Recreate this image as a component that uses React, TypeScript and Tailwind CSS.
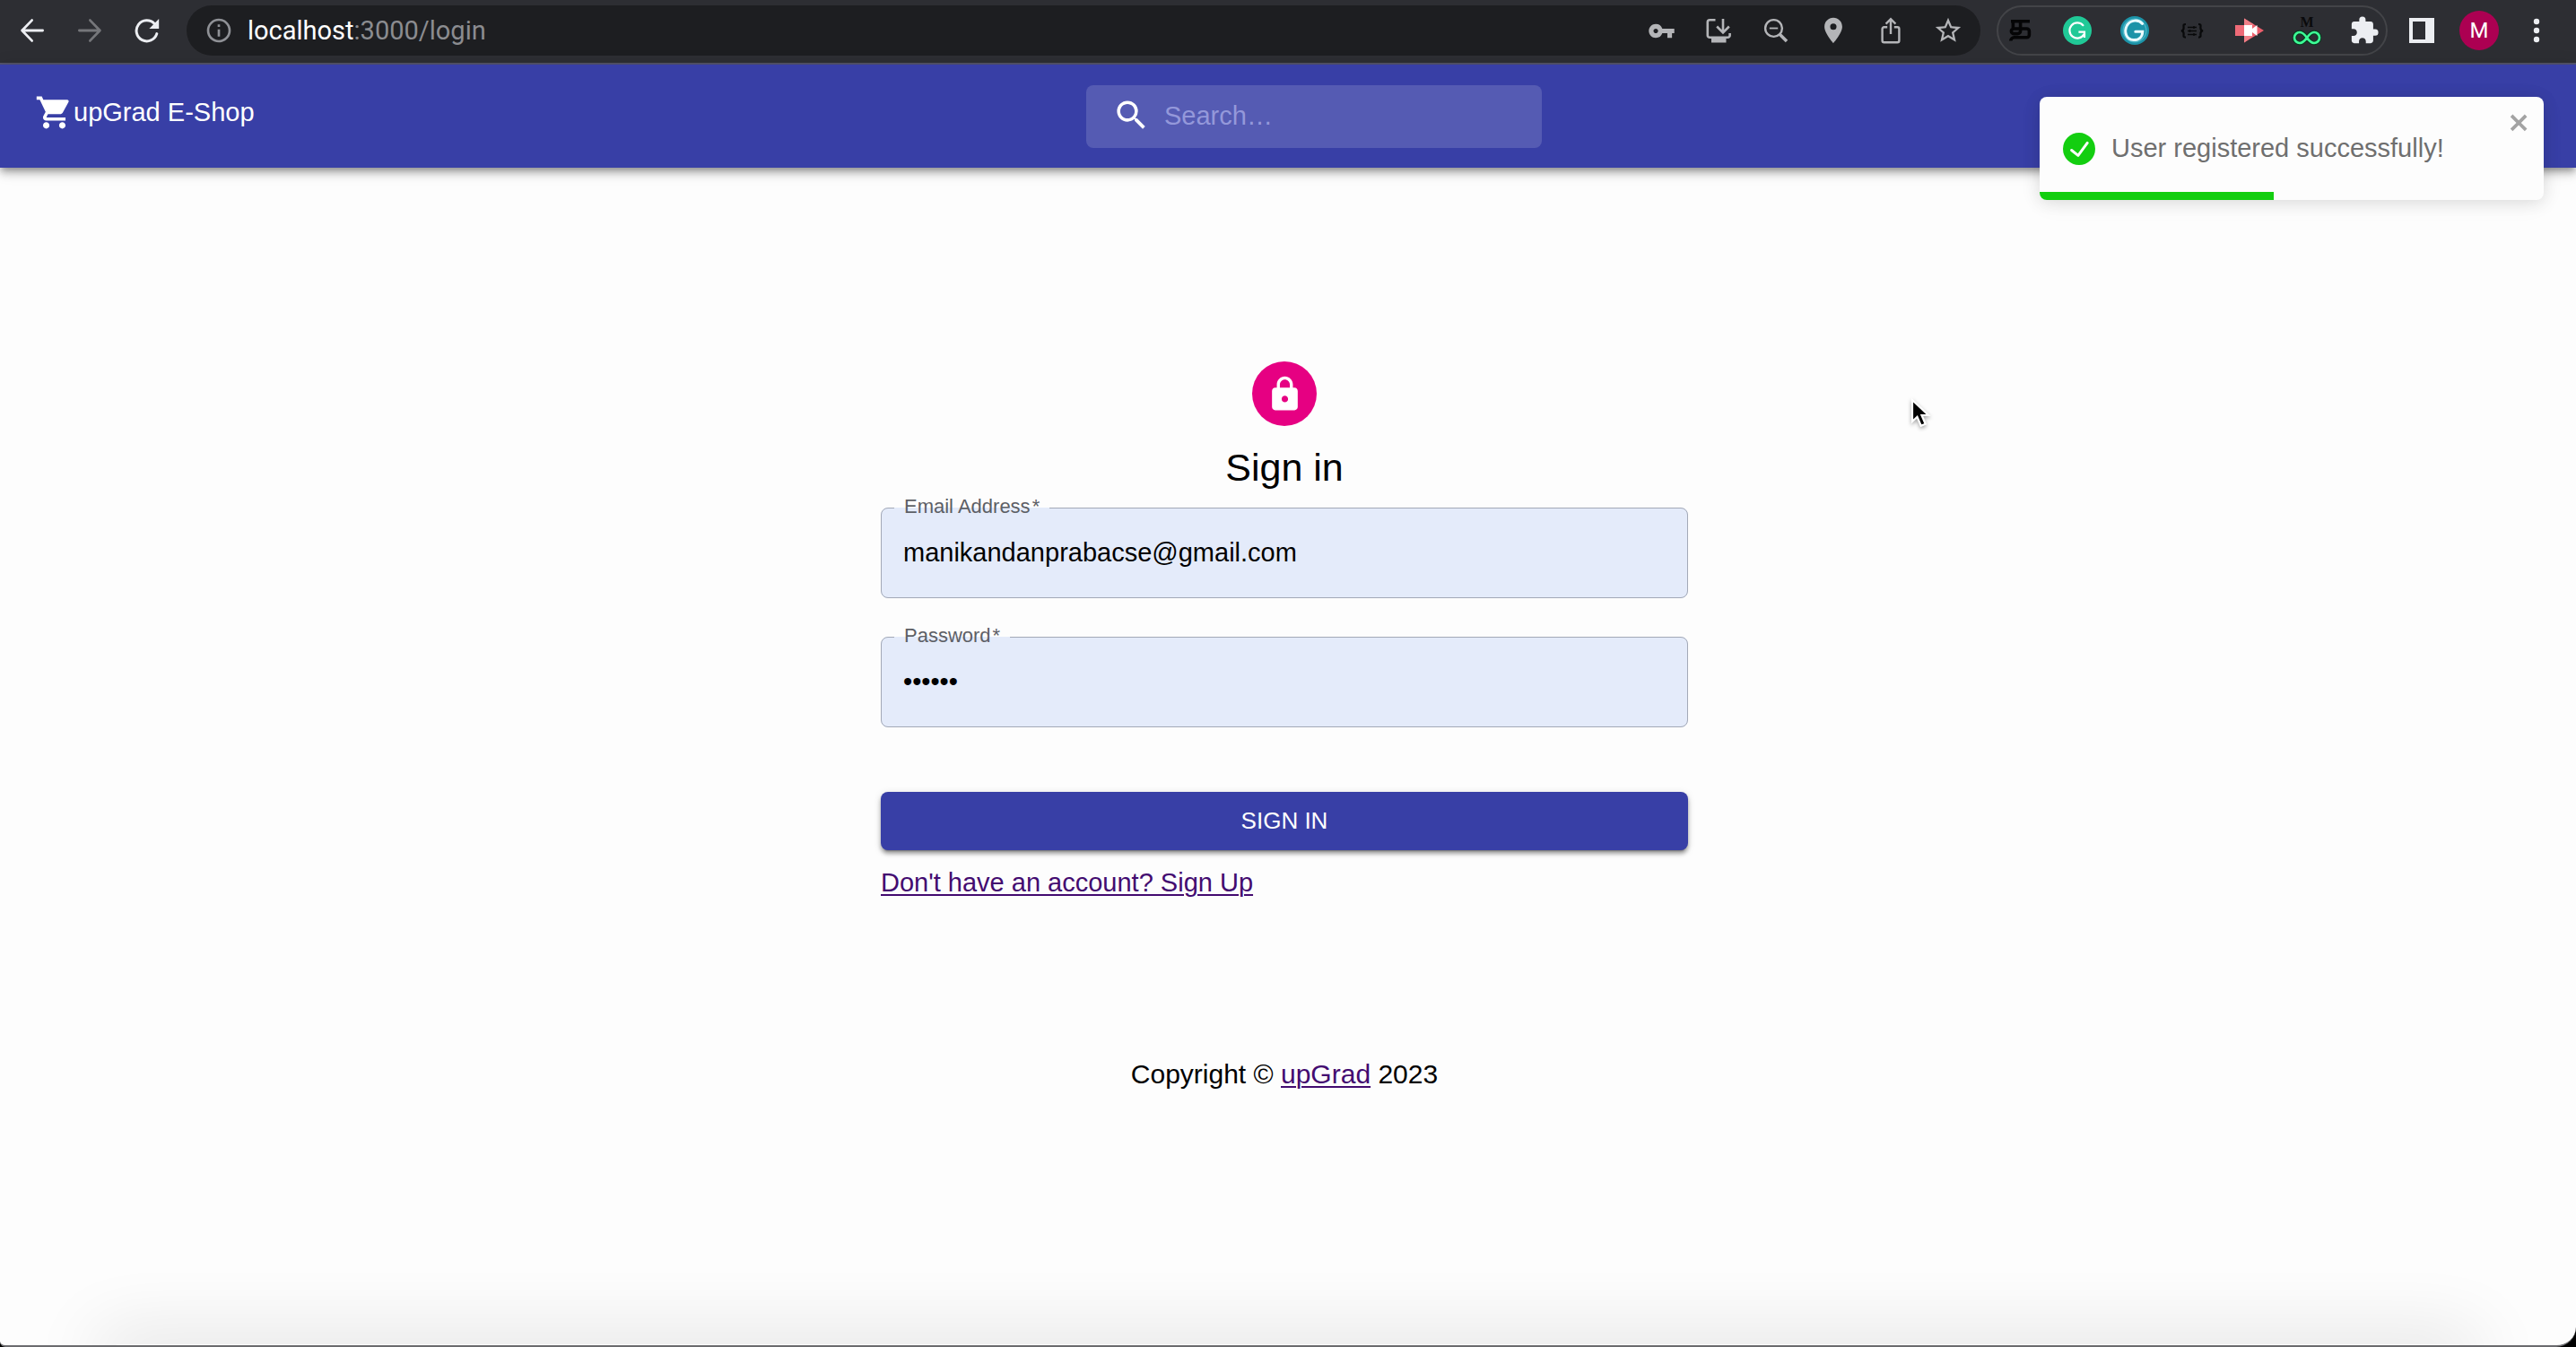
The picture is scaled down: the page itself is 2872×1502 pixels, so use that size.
import type { ReactNode } from "react";
import {
  MdExtension,
  MdInfoOutline,
  MdLocationOn,
  MdLock,
  MdSearch,
  MdShoppingCart,
  MdStarBorder,
  MdVpnKey,
} from "react-icons/md";

function BarButton({ label, narrow, children }: { label: string; narrow?: boolean; children: ReactNode }) {
  return (
    <button
      type="button"
      aria-label={label}
      className={
        narrow
          ? "flex h-12 w-12 shrink-0 items-center justify-center"
          : "flex h-12 w-16 shrink-0 items-center justify-center"
      }
    >
      {children}
    </button>
  );
}

function ArrowIcon({ forward }: { forward?: boolean }) {
  return (
    <svg
      viewBox="0 0 28 28"
      fill="none"
      stroke="currentColor"
      strokeWidth="2.8"
      strokeLinecap="round"
      strokeLinejoin="round"
      className={forward ? "size-7 rotate-180 text-[#75767a]" : "size-7 text-[#eceef2]"}
    >
      <path d="M13.6 2.6 2.6 14l11 11.4M2.6 14h23" />
    </svg>
  );
}

function ReloadIcon() {
  return (
    <svg viewBox="0 0 28 28" fill="none" className="size-7 text-[#eceef2]">
      <path
        d="M22.2 6.4A11.6 11.6 0 1 0 24.8 17.6"
        stroke="currentColor"
        strokeWidth="3"
        strokeLinecap="round"
      />
      <path d="M27.2 1v11H16.4z" fill="currentColor" />
    </svg>
  );
}

function InstallIcon() {
  return (
    <svg viewBox="0 0 30 30" fill="none" stroke="currentColor" strokeWidth="2.6" className="size-[30px]">
      <path d="M11.5 3.3H5.2a2.4 2.4 0 0 0-2.4 2.4v14.7a2.4 2.4 0 0 0 2.4 2.4h20a2.4 2.4 0 0 0 2.4-2.4V18" />
      <path d="M20 2v14.5M13.2 10.5l6.8 6.8 6.8-6.8" />
      <path d="M7 23h16.5v5.5H7z" fill="currentColor" stroke="none" />
    </svg>
  );
}

function ZoomOutIcon() {
  return (
    <svg viewBox="0 0 28 28" fill="none" stroke="currentColor" strokeWidth="2.4" className="size-7">
      <circle cx="11.5" cy="11.5" r="9.4" />
      <path d="M6.8 11.5h9.4" strokeWidth="1.8" />
      <path d="m18 18 8 8" strokeWidth="3.6" />
    </svg>
  );
}

function ShareIcon() {
  return (
    <svg viewBox="0 0 24 30" fill="none" stroke="currentColor" strokeWidth="2.4" className="h-[30px] w-6">
      <path d="M8.2 11.2H4.6a2 2 0 0 0-2 2v13a2 2 0 0 0 2 2h14.8a2 2 0 0 0 2-2v-13a2 2 0 0 0-2-2h-3.6" />
      <path d="M12 19V2.4M6.6 7.6 12 2.2l5.4 5.4" />
    </svg>
  );
}

function TamilIcon() {
  return (
    <svg viewBox="0 0 26 26" fill="none" stroke="#050506" strokeWidth="3.6" className="size-[26px]">
      <path d="M3 2.8h21M5.4 2.8v9.4M13.6 2.8v10.600a3.200 3.200 0 0 1-3.200 3.200H6.200a2.800 2.800 0 0 1-2.800-2.800 2.800 2.800 0 0 1 2.800-2.800H20.600a2.800 2.800 0 0 1 2.800 2.800v4.200a2.800 2.800 0 0 1-2.800 2.800H6.600a3.800 3.800 0 0 0-3.800 3.800" />
    </svg>
  );
}

function GrammarlyIcon() {
  return (
    <svg viewBox="0 0 32 32" fill="none" className="size-8">
      <circle cx="16" cy="16" r="16" fill="#20c997" />
      <path d="M22.400 10.200A8.600 8.600 0 1 0 23.400 20.400" stroke="#fff" strokeWidth="2.200" strokeLinecap="round" />
      <path d="M17.400 17.600h6.600v6.400" stroke="#fff" strokeWidth="2.200" />
    </svg>
  );
}

function TealGIcon() {
  return (
    <svg viewBox="0 0 32 32" fill="none" className="size-8">
      <circle cx="16" cy="16" r="16" fill="#1c93a8" />
      <circle cx="16" cy="16" r="12.800" stroke="#48b5c6" strokeWidth="1.400" />
      <path
        d="M24.600 8.400C20.400 3.600 11.400 3.800 7.400 10.400 3.600 17.600 6.600 26 14.600 26.600c6.400.2 10-3.800 10.200-9.400h-8"
        stroke="#e9fbff"
        strokeWidth="3"
        strokeLinecap="round"
      />
    </svg>
  );
}

function BracesIcon() {
  return (
    <svg viewBox="0 0 28 20" fill="none" stroke="#08090a" strokeWidth="2.200" className="h-5 w-7">
      <path d="M7 3C3.600 3 4.600 4.600 4.600 7S4 10.400 1.800 10.400c2.200 0 2.800 1 2.800 3.400S3.600 17.600 7 17.600M21 3c3.400 0 2.400 1.600 2.400 4s.6 3.400 2.800 3.400c-2.200 0-2.800 1-2.800 3.400s1 3.800-2.400 3.800" />
      <path d="M9 6.500h10M9 10.500h10M9 14.500h10M16 5v3M11.500 9v3M16 13v3" strokeWidth="1.400" />
    </svg>
  );
}

function RecorderIcon() {
  return (
    <svg viewBox="0 0 34 34" className="size-[34px]">
      <path d="M11 3.500 33 17 11 30.500z" fill="#ec5f6c" />
      <path d="M1 11h10v12H1z" fill="#ee6a77" />
      <path d="M11 3.500 21.500 10v1H11zM11 23h10.500L11 30.500z" fill="#f08088" />
      <path d="M11 11h9v4l5.500-4v12L20 19v4h-9z" fill="#fff" />
    </svg>
  );
}

function InfinityIcon() {
  return (
    <span className="flex flex-col items-center">
      <span className="font-['Liberation_Serif',serif] text-base leading-4 font-bold text-[#0a0a0b]">M</span>
      <svg viewBox="0 0 32 18" fill="none" className="h-[18px] w-8">
        <path
          d="M16 9c-3-4.200-5.200-6-8-6a6 6 0 0 0 0 12c2.800 0 5-1.800 8-6s5.200-6 8-6a6 6 0 0 1 0 12c-2.800 0-5-1.800-8-6z"
          stroke="#0c3a22"
          strokeWidth="5"
        />
        <path
          d="M16 9c-3-4.200-5.200-6-8-6a6 6 0 0 0 0 12c2.800 0 5-1.800 8-6s5.200-6 8-6a6 6 0 0 1 0 12c-2.800 0-5-1.800-8-6z"
          stroke="#3dff97"
          strokeWidth="2.600"
        />
      </svg>
    </span>
  );
}

function BrowserBar() {
  return (
    <div className="flex h-[72px] items-center border-b-2 border-[#54546c] bg-[#2d2e33] pr-3 pb-0.5 pl-1">
      <BarButton label="Back"><ArrowIcon /></BarButton>
      <BarButton label="Forward"><ArrowIcon forward /></BarButton>
      <BarButton label="Reload"><ReloadIcon /></BarButton>
      <div className="ml-3 flex h-14 min-w-0 flex-1 items-center rounded-full bg-[#1d1e21] pr-1 pl-5 text-[#b4b5b8]">
        <button type="button" aria-label="Site information" className="text-[#8f9196]">
          <MdInfoOutline className="size-8" />
        </button>
        <div className="ml-4 flex-1 font-[Roboto,sans-serif] text-[29px] leading-9 text-[#8b8c90]">
          <span className="text-white">localhost</span>:3000/login
        </div>
        <BarButton label="Passwords"><MdVpnKey className="size-[31px]" /></BarButton>
        <BarButton label="Install"><InstallIcon /></BarButton>
        <BarButton label="Zoom"><ZoomOutIcon /></BarButton>
        <BarButton label="Location"><MdLocationOn className="size-[34px]" /></BarButton>
        <BarButton label="Share"><ShareIcon /></BarButton>
        <BarButton label="Bookmark"><MdStarBorder className="size-[34px]" /></BarButton>
      </div>
      <div className="ml-[18px] flex h-14 items-center gap-4 rounded-full border-2 border-[#434448]">
        <BarButton narrow label="Tamil input"><TamilIcon /></BarButton>
        <BarButton narrow label="Grammarly"><GrammarlyIcon /></BarButton>
        <BarButton narrow label="Grammar"><TealGIcon /></BarButton>
        <BarButton narrow label="JSON"><BracesIcon /></BarButton>
        <BarButton narrow label="Recorder"><RecorderIcon /></BarButton>
        <BarButton narrow label="Unlimited"><InfinityIcon /></BarButton>
        <BarButton narrow label="Extensions"><MdExtension className="size-[34px] text-[#eceef2]" /></BarButton>
      </div>
      <div className="ml-1.5 flex items-center">
        <BarButton label="Side panel">
          <svg viewBox="0 0 28 28" className="size-7">
            <path d="M0 0h28v28H0zM4 4v20h14V4z" fill="#eceef2" fillRule="evenodd" />
          </svg>
        </BarButton>
        <BarButton label="Profile">
          <span className="flex size-11 items-center justify-center rounded-full bg-[#ac0052] font-[Roboto,sans-serif] text-2xl text-white">
            M
          </span>
        </BarButton>
        <BarButton label="Menu">
          <svg viewBox="0 0 8 28" className="h-7 w-2" fill="#eceef2">
            <circle cx="4" cy="4" r="3.200" />
            <circle cx="4" cy="14" r="3.200" />
            <circle cx="4" cy="24" r="3.200" />
          </svg>
        </BarButton>
      </div>
    </div>
  );
}

function AppHeader() {
  return (
    <header className="grid h-[115px] grid-cols-[1172fr_508fr_1153fr] items-center bg-[#383fa6] pl-[39px] text-white shadow-[0_4px_7px_-2px_rgba(0,0,0,0.3),0_7px_9px_rgba(0,0,0,0.16),0_2px_18px_rgba(0,0,0,0.14)]">
      <div className="flex items-center pb-2">
        <MdShoppingCart className="size-[43px]" />
        <span className="pb-0.5 text-[29px] leading-10">upGrad E-Shop</span>
      </div>
      <label className="flex h-[70px] items-center rounded-lg bg-white/15 pr-4 pb-0.5 pl-[29px]">
        <MdSearch className="size-[43px] shrink-0" />
        <input
          type="search"
          aria-label="Search"
          placeholder="Search…"
          className="ml-[15px] min-w-0 flex-1 bg-transparent text-[29px] leading-10 outline-none placeholder:text-[#9498da]"
        />
      </label>
    </header>
  );
}

function Toast() {
  return (
    <div
      role="alert"
      className="absolute top-[108px] right-9 flex h-[115px] w-[562px] items-center overflow-hidden rounded-lg bg-[#fdfdfd] pl-[26px] text-[#6f6f6f] shadow-[0_2px_18px_rgba(0,0,0,0.1),0_4px_27px_rgba(0,0,0,0.06)]"
    >
      <svg viewBox="0 0 24 24" className="size-9" fill="#13ce10">
        <path d="M12 0a12 12 0 1012 12A12.014 12.014 0 0012 0zm6.927 8.200l-6.845 9.289a1.011 1.011 0 01-1.430.188l-4.888-3.908a1 1 0 111.250-1.562l4.076 3.261 6.227-8.451a1 1 0 111.610 1.183z" />
      </svg>
      <p className="ml-[18px] pb-0.5 text-[29px] leading-10">User registered successfully!</p>
      <button type="button" aria-label="Close" className="absolute top-[14px] right-[14px] text-[#a3a3a3]">
        <svg viewBox="0 0 14 16" className="h-[29px] w-[25px]" fill="currentColor">
          <path
            fillRule="evenodd"
            d="M7.710 8.230l3.750 3.750-1.480 1.480-3.750-3.750-3.750 3.750L1 11.980l3.750-3.750L1 4.480 2.480 3l3.750 3.750L9.980 3l1.480 1.480-3.750 3.750z"
          />
        </svg>
      </button>
      <div className="absolute bottom-0 left-0 h-[9px] w-[261px] bg-[#13ce10]" />
    </div>
  );
}

function Field({ id, label, type, value }: { id: string; label: string; type: string; value: string }) {
  return (
    <fieldset className="h-[101px] min-w-0 rounded-lg border border-[#a3a9b7] bg-[#e4ebfa]">
      <legend className="ml-[14px] flex h-px items-center px-[11px]">
        <label htmlFor={id} className="pb-1 text-[22px] leading-6 whitespace-nowrap text-[#5d6066]">
          {label}
          <span className="ml-0.5">*</span>
        </label>
      </legend>
      <input
        id={id}
        type={type}
        defaultValue={value}
        required
        className="h-[99px] w-full bg-transparent px-6 text-[29px] text-black outline-none"
      />
    </fieldset>
  );
}

function SignInForm() {
  return (
    <main className="flex flex-1 flex-col items-center pt-[216px] pr-2">
      <div className="flex size-[72px] items-center justify-center rounded-full bg-[#e60082] text-white">
        <MdLock className="size-[43px]" />
      </div>
      <h1 className="mt-[17px] text-[43px] leading-[58px]">Sign in</h1>
      <form className="mt-4 flex w-[900px] max-w-full flex-col" onSubmit={(e) => e.preventDefault()}>
        <Field id="email" label="Email Address" type="email" value="manikandanprabacse@gmail.com" />
        <div className="mt-[43px]">
          <Field id="password" label="Password" type="password" value="secret" />
        </div>
        <button
          type="submit"
          className="mt-[72px] h-[65px] rounded-lg bg-[#383fa6] text-[26px] text-white shadow-[0_5px_2px_-4px_rgba(0,0,0,0.3),0_4px_4px_rgba(0,0,0,0.3),0_2px_9px_rgba(0,0,0,0.15)]"
        >
          SIGN IN
        </button>
        <a
          href="#signup"
          className="mt-4 self-start text-[29px] leading-10 text-[#430b70] underline decoration-2 underline-offset-3"
        >
          Don't have an account? Sign Up
        </a>
      </form>
      <p className="mt-[174px] text-[30px] leading-10">
        Copyright ©{" "}
        <a href="#upgrad" className="text-[#430b70] underline decoration-2 underline-offset-3">
          upGrad
        </a>{" "}
        2023
      </p>
    </main>
  );
}

function Pointer() {
  return (
    <svg
      viewBox="0 0 24 36"
      className="absolute top-[443px] left-[2130px] h-9 w-6 drop-shadow-[0_2px_2px_rgba(0,0,0,0.35)]"
    >
      <path
        d="M2 3v24l5.500-5.200 4.200 10 5-2.100-4.200-9.700H20z"
        fill="#000"
        stroke="#fff"
        strokeWidth="2.200"
      />
    </svg>
  );
}

export default function App() {
  return (
    <div className="bg-black">
      <div className="relative flex min-h-screen flex-col overflow-hidden rounded-br-[22px] rounded-bl-md border-b-2 border-[#6b6b6e] bg-[#fdfdfd] font-['Liberation_Sans',Arial,sans-serif] text-black">
        <BrowserBar />
        <AppHeader />
        <SignInForm />
        <div className="mx-[130px] h-px shadow-[0_12px_80px_20px_rgba(0,0,0,0.14)]" />
        <Toast />
        <Pointer />
      </div>
    </div>
  );
}
